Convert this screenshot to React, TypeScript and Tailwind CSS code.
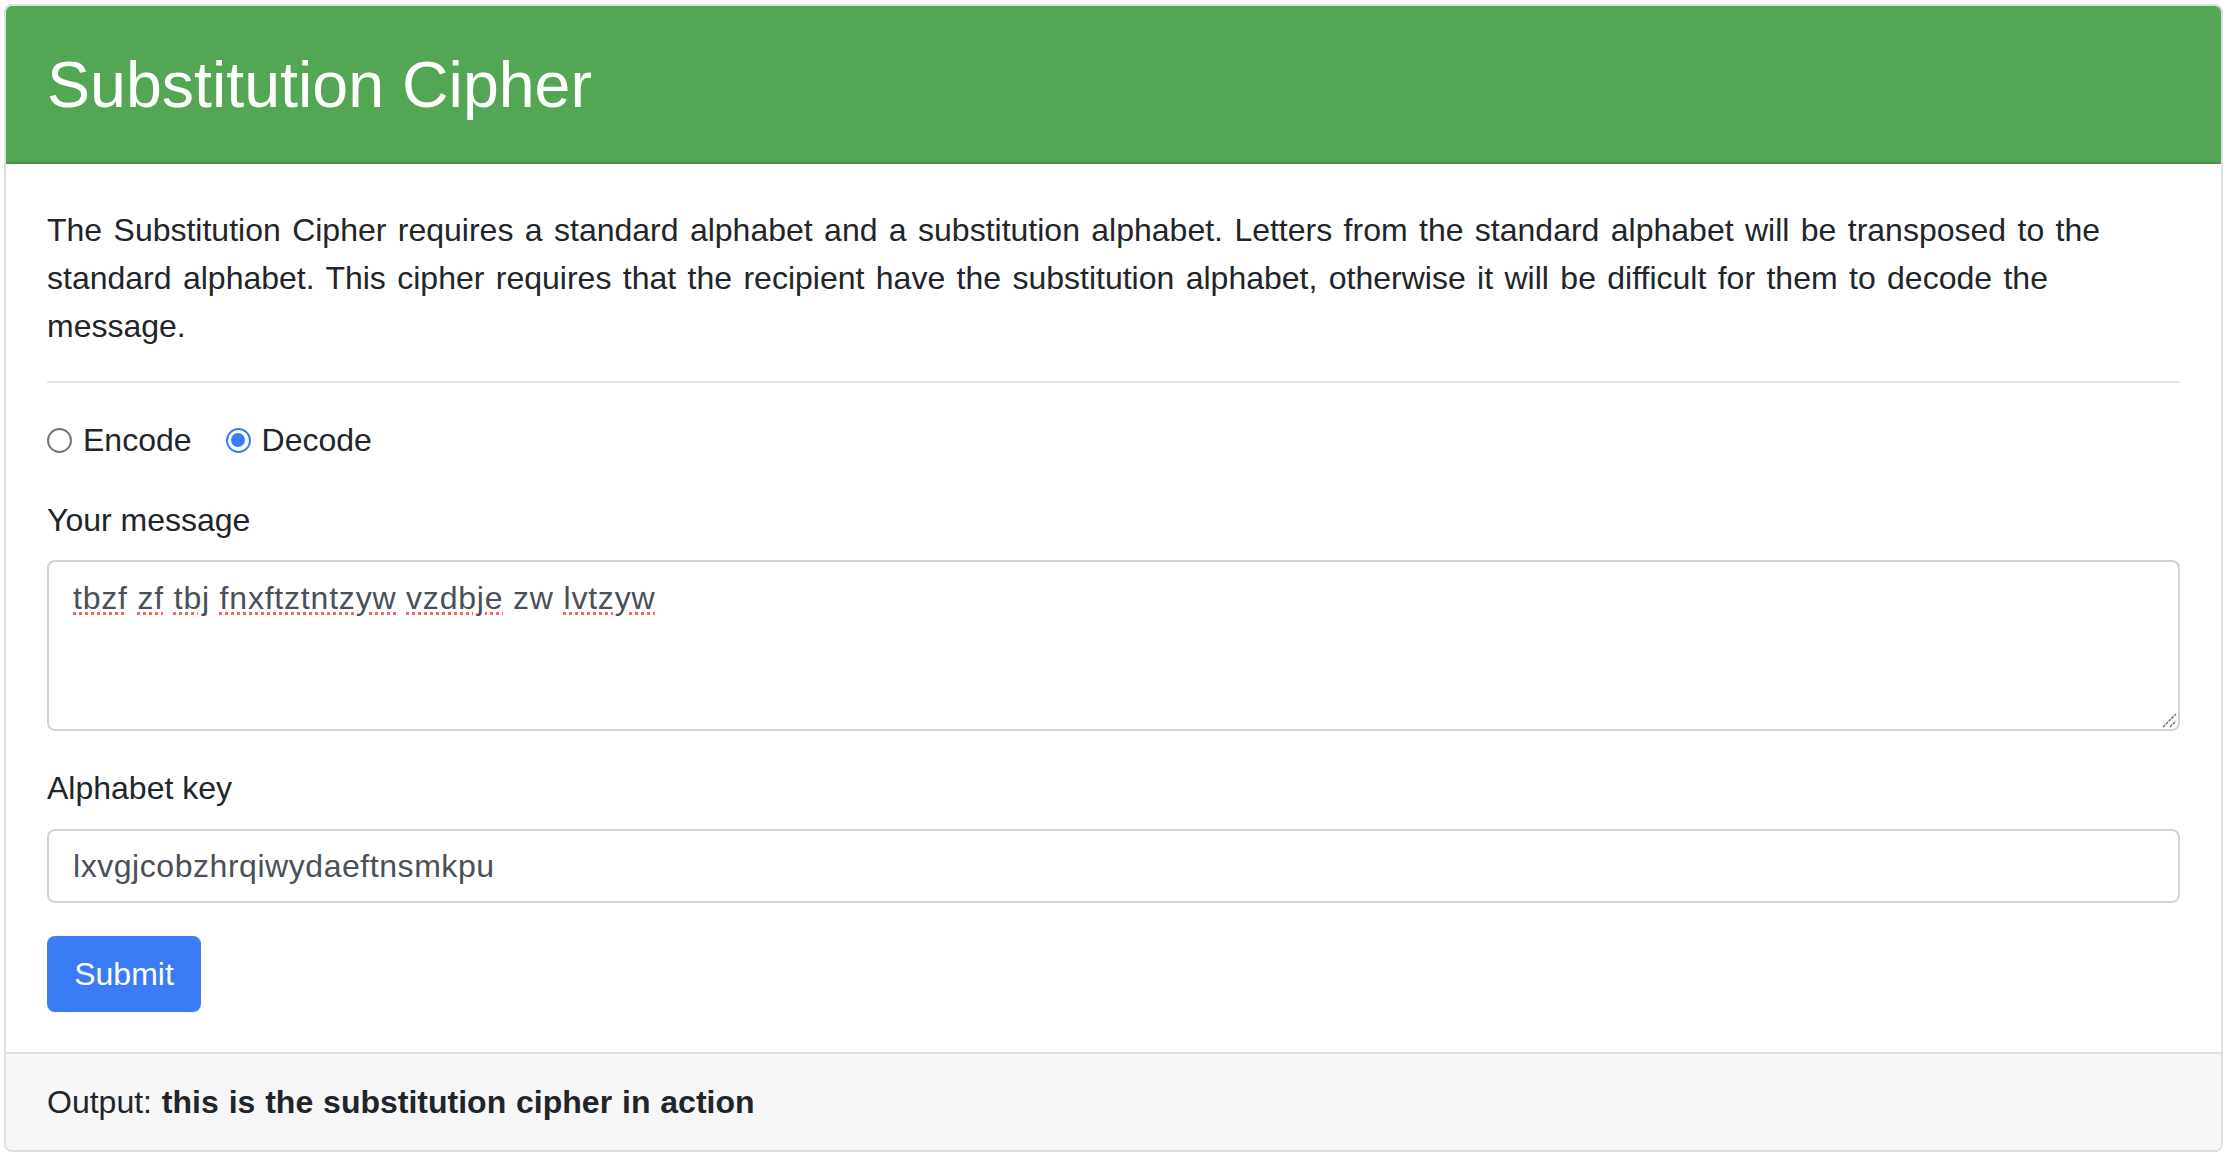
import React from "react"

// Words the browser's spell-checker flags in the message box
const Flagged = ({ children }: { children: React.ReactNode }) => (
  <span className="underline decoration-dotted decoration-[#ec6a60] decoration-[3px] underline-offset-[3px]">
    {children}
  </span>
)

const Radio = ({ checked }: { checked?: boolean }) =>
  checked ? (
    <span className="flex h-[25px] w-[25px] items-center justify-center rounded-full border-2 border-[#3a7cf6] bg-white">
      <span className="h-[14px] w-[14px] rounded-full bg-[#3a7cf6]" />
    </span>
  ) : (
    <span className="h-[25px] w-[25px] rounded-full border-2 border-[#767676] bg-white" />
  )

export default function App() {
  return (
    <div className="min-h-screen bg-white pl-[4px] pt-[4px] text-[#212529] [font-family:'Liberation_Sans',Arial,sans-serif]">
      <div className="w-[2219px] overflow-hidden rounded-[8px] border-2 border-[#dfdfdf]">
        {/* Header */}
        <div className="flex h-[158px] items-center border-b-2 border-[#4a914a] bg-[#53a653] px-[41px] pt-[3px]">
          <h1 className="text-[64.5px] leading-[1.2] text-white">Substitution Cipher</h1>
        </div>

        {/* Body */}
        <div className="px-[41px] pb-[40px] pt-[42px] text-[32px] leading-[48px]">
          <p className="[word-spacing:2.5px]">
            The Substitution Cipher requires a standard alphabet and a substitution alphabet. Letters from the
            standard alphabet will be transposed to the standard alphabet. This cipher requires that the recipient
            have the substitution alphabet, otherwise it will be difficult for them to decode the message.
          </p>

          <hr className="mb-[33px] mt-[31px] border-t-2 border-[#e6e6e6]" />

          <div className="flex h-[48px] items-center">
            <label className="flex items-center gap-[11px]">
              <Radio />
              <span>Encode</span>
            </label>
            <label className="ml-[34px] flex items-center gap-[11px]">
              <Radio checked />
              <span>Decode</span>
            </label>
          </div>

          <div className="mt-[32px]">Your message</div>
          <div className="relative mt-[16px] h-[171px] rounded-[8px] border-2 border-[#ced4da] px-[24px] py-[12px] tracking-[0.8px] text-[#495057]">
            <Flagged>tbzf</Flagged> <Flagged>zf</Flagged> <Flagged>tbj</Flagged> <Flagged>fnxftztntzyw</Flagged>{" "}
            <Flagged>vzdbje</Flagged> zw <Flagged>lvtzyw</Flagged>
            <svg className="absolute bottom-[1px] right-[1px]" width="16" height="16" viewBox="0 0 16 16">
              <path d="M2 15 L15 2" stroke="#6f6f6f" strokeWidth="1.5" strokeDasharray="3 1" />
              <path d="M9 15 L15 9" stroke="#6f6f6f" strokeWidth="1.5" strokeDasharray="3 1" />
            </svg>
          </div>

          <div className="mt-[33px]">Alphabet key</div>
          <div className="mt-[17px] flex h-[74px] items-center rounded-[8px] border-2 border-[#ced4da] px-[24px] tracking-[0.55px] text-[#495057]">
            lxvgjcobzhrqiwydaeftnsmkpu
          </div>

          <button className="mt-[33px] flex h-[76px] w-[154px] items-center justify-center rounded-[8px] bg-[#3a7cf6] text-white">
            Submit
          </button>
        </div>

        {/* Footer */}
        <div className="border-t-2 border-[#dfdfdf] bg-[#f7f7f7] px-[41px] py-[24px] text-[32px] leading-[48px] [word-spacing:1px]">
          Output: <strong className="font-bold">this is the substitution cipher in action</strong>
        </div>
      </div>
    </div>
  )
}
